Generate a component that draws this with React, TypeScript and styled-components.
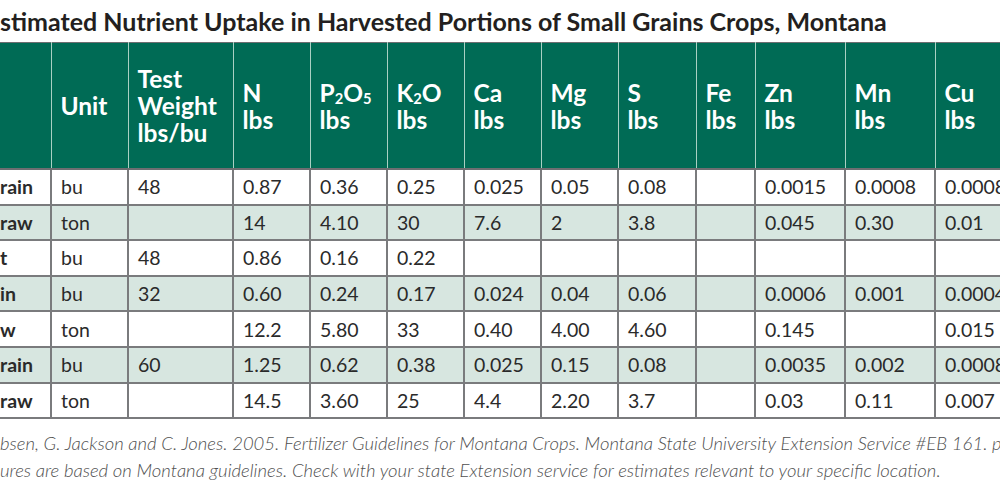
import React from 'react';
import styled, { createGlobalStyle } from 'styled-components';

const GlobalStyle = createGlobalStyle`
    body {
        margin: 0;
        background-color: #ffffff;
    }
`

const Viewport = styled.div`
    width: 1000px;
    height: 500px;
    overflow: hidden;
    background-color: #ffffff;
    font-family: Lato, "Open Sans", sans-serif;
    color: #2a2a2a;
`

const Title = styled.h2`
    margin: 0;
    height: 42px;
    font-size: 25px;
    font-weight: 700;
    line-height: 42px;
    color: #231f20;
    white-space: nowrap;
`

const Table = styled.table`
    width: 1025px;
    table-layout: fixed;
    border-collapse: collapse;
    border-top: 1px solid #6d6e71;
`

const HeadCell = styled.th<{ $first?: boolean }>`
    height: 125px;
    padding: 0 ${(p) => (p.$first ? 0 : 9)}px;
    background-color: #006b55;
    color: #ffffff;
    font-size: 24.5px;
    font-weight: 700;
    line-height: 27px;
    text-align: left;
    vertical-align: middle;
    border-left: ${(p) => (p.$first ? 'none' : '1px solid #a9d0c3')};
    border-bottom: 2px solid #6d6e71;
`

const Sub = styled.sub`
    font-size: 0.6em;
    line-height: 0;
    vertical-align: -0.15em;
`

const Row = styled.tr<{ $shade: boolean }>`
    height: 35.6px;
    background-color: ${(p) => (p.$shade ? '#d7e6e0' : '#ffffff')};
`

const Cell = styled.td<{ $label?: boolean }>`
    padding: 0 ${(p) => (p.$label ? '0' : '9px')};
    border: 2px solid #7a7b7d;
    border-left: ${(p) => (p.$label ? 'none' : '2px solid #7a7b7d')};
    font-size: 19.5px;
    font-weight: ${(p) => (p.$label ? 700 : 400)};
    white-space: nowrap;
    vertical-align: middle;
`

const Notes = styled.div`
    padding-top: 11px;
    font-size: 18.5px;
    font-style: italic;
    font-weight: 300;
    line-height: 27px;
    color: #505050;
    white-space: nowrap;
`

const widths = [51, 77, 105, 77, 77, 77, 77, 77, 78, 59, 90, 90, 90];

const rows = [
    ['rain', 'bu', '48', '0.87', '0.36', '0.25', '0.025', '0.05', '0.08', '', '0.0015', '0.0008', '0.0008'],
    ['raw', 'ton', '', '14', '4.10', '30', '7.6', '2', '3.8', '', '0.045', '0.30', '0.01'],
    ['t', 'bu', '48', '0.86', '0.16', '0.22', '', '', '', '', '', '', ''],
    ['in', 'bu', '32', '0.60', '0.24', '0.17', '0.024', '0.04', '0.06', '', '0.0006', '0.001', '0.0004'],
    ['w', 'ton', '', '12.2', '5.80', '33', '0.40', '4.00', '4.60', '', '0.145', '', '0.015'],
    ['rain', 'bu', '60', '1.25', '0.62', '0.38', '0.025', '0.15', '0.08', '', '0.0035', '0.002', '0.0008'],
    ['raw', 'ton', '', '14.5', '3.60', '25', '4.4', '2.20', '3.7', '', '0.03', '0.11', '0.007'],
];

const App: React.FC = () => {
    return (
        <Viewport>
            <GlobalStyle />
            <Title>stimated Nutrient Uptake in Harvested Portions of Small Grains Crops, Montana</Title>
            <Table>
                <colgroup>
                    {widths.map((w, i) => (
                        <col key={i} style={{ width: w }} />
                    ))}
                </colgroup>
                <thead>
                    <tr>
                        <HeadCell $first />
                        <HeadCell>Unit</HeadCell>
                        <HeadCell>Test<br />Weight<br />lbs/bu</HeadCell>
                        <HeadCell>N<br />lbs</HeadCell>
                        <HeadCell>P<Sub>2</Sub>O<Sub>5</Sub><br />lbs</HeadCell>
                        <HeadCell>K<Sub>2</Sub>O<br />lbs</HeadCell>
                        <HeadCell>Ca<br />lbs</HeadCell>
                        <HeadCell>Mg<br />lbs</HeadCell>
                        <HeadCell>S<br />lbs</HeadCell>
                        <HeadCell>Fe<br />lbs</HeadCell>
                        <HeadCell>Zn<br />lbs</HeadCell>
                        <HeadCell>Mn<br />lbs</HeadCell>
                        <HeadCell>Cu<br />lbs</HeadCell>
                    </tr>
                </thead>
                <tbody>
                    {rows.map((r, i) => (
                        <Row key={i} $shade={i % 2 === 1}>
                            {r.map((v, j) => (
                                <Cell key={j} $label={j === 0}>{v}</Cell>
                            ))}
                        </Row>
                    ))}
                </tbody>
            </Table>
            <Notes>
                <div>bsen, G. Jackson and C. Jones. 2005. Fertilizer Guidelines for Montana Crops. Montana State University Extension Service #EB 161. p.</div>
                <div>ures are based on Montana guidelines. Check with your state Extension service for estimates relevant to your specific location.</div>
            </Notes>
        </Viewport>
    );
};

export default App;
